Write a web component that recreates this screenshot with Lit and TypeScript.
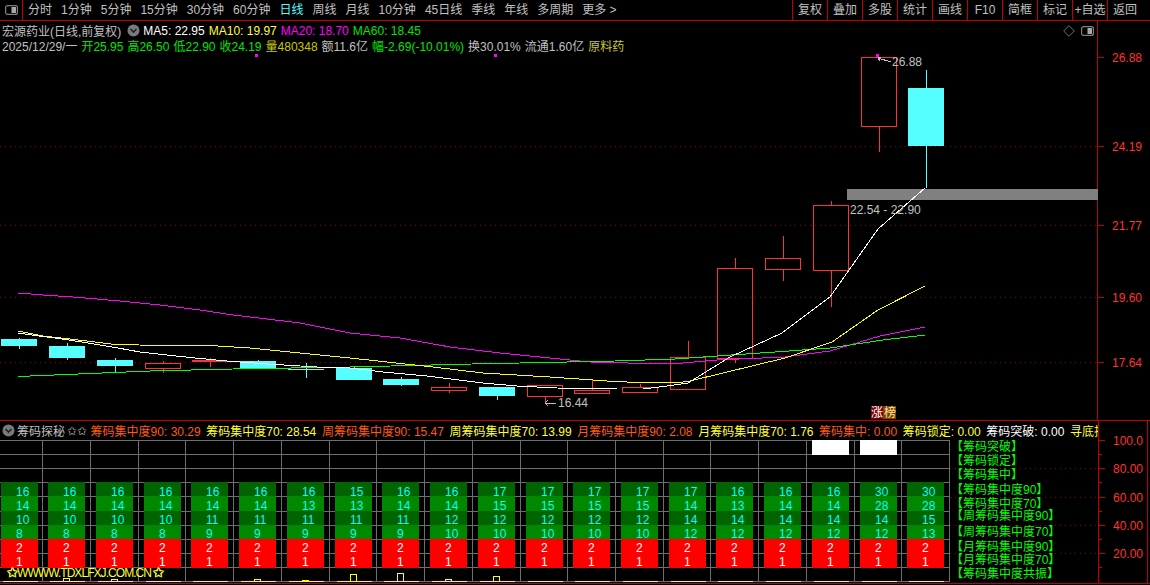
import { LitElement, html, svg, css } from "lit";
import { customElement } from "lit/decorators.js";

const RED = "#ff3232";
const CY = "#55ffff";
const DOT = "#8c0000";

type Candle = [number, number, number, number, number, number, boolean];
// x-left, x-right, body top, body bottom, wick top, wick bottom, rising
const candles: Candle[] = [
  [1, 36, 339, 346, 338, 349, false],
  [49, 84, 346, 358, 343, 360, false],
  [97, 132, 360, 366, 358, 373, false],
  [145, 180, 363, 368, 361, 373, true],
  [192, 227, 360, 362, 358, 367, true],
  [240, 275, 361, 368, 360, 369, false],
  [288, 323, 369, 370, 363, 378, false],
  [336, 371, 368, 380, 366, 380, false],
  [383, 418, 379, 385, 377, 386, false],
  [431, 466, 387, 390, 383, 393, true],
  [479, 514, 387, 396, 387, 400, false],
  [527, 562, 385, 396, 385, 403, true],
  [574, 609, 390, 393, 379, 394, true],
  [622, 657, 387, 392, 384, 392, true],
  [670, 705, 357, 389, 341, 389, true],
  [717, 752, 268, 358, 258, 363, true],
  [765, 800, 258, 269, 236, 281, true],
  [813, 848, 205, 270, 201, 307, true],
  [861, 896, 57, 126, 57, 152, true],
  [908, 943, 88, 146, 70, 188, false],
];

const ma5 = "18,333 39,336 55,338 82,342 100,345 118,348 140,352 167,355 195,358 227,361 267,364 317,367 350,368 383,372 427,376 483,383 517,386 557,388 617,389 643,389 667,386 688,383 730,357 782,333 830,297 878,229 925,188";
const ma10 = "18,331 43,336 70,339 95,342 111,344 139,345 218,346 250,348 290,352 350,358 387,362 433,367 483,373 550,377 607,381 627,382 683,382 690,381 785,358 832,342 878,310 925,286";
const ma20 = "18,293 43,295 73,297 120,301 160,305 200,310 233,315 267,319 300,323 350,333 400,338 450,347 500,353 550,358 590,362 628,363 683,363 717,360 785,357 830,351 880,336 925,327";
const ma60 = "18,377 30,376 78,374 150,371 233,369 350,367 472,364 520,363 615,361 675,359 717,356 775,352 830,348 883,340 925,335";

const bars = [1, 48, 96, 144, 191, 239, 287, 335, 382, 430, 478, 526, 573, 621, 669, 716, 764, 812, 860, 907];
const vlines = [42, 90, 138, 185, 233, 281, 329, 376, 424, 472, 520, 567, 615, 663, 710, 758, 806, 854, 901, 949];
const hlines = [440, 454, 468, 482, 496, 511, 525, 539, 553, 567, 581];
const rows: number[][] = [
  [16, 16, 16, 16, 16, 16, 16, 15, 16, 16, 17, 17, 17, 17, 17, 16, 16, 16, 30, 30],
  [14, 14, 14, 14, 14, 14, 13, 13, 14, 14, 15, 15, 15, 15, 14, 13, 14, 14, 28, 28],
  [10, 10, 10, 10, 11, 11, 11, 11, 11, 12, 12, 12, 12, 12, 14, 14, 14, 14, 14, 15],
  [8, 8, 8, 8, 9, 9, 9, 9, 9, 10, 10, 10, 10, 10, 12, 12, 12, 12, 12, 13],
];
const rowBand: [number, number, string][] = [
  [482, 14, "#006400"],
  [496, 15, "#008800"],
  [511, 14, "#006400"],
  [525, 14, "#008800"],
];
const legend: [string, number][] = [
  ["【筹码突破】", 447], ["【筹码锁定】", 461], ["【筹码集中】", 475],
  ["【筹码集中度90】", 490], ["【筹码集中度70】", 504], ["【周筹码集中度90】", 516],
  ["【周筹码集中度70】", 532], ["【月筹码集中度90】", 547], ["【月筹码集中度70】", 560],
  ["【筹码集中度共振】", 574],
];
const volBoxes: [number, number, boolean][] = [
  [63, 578, false], [111, 579, false], [254, 579, false], [302, 580, true],
  [350, 574, false], [397, 573, false], [445, 579, false], [493, 576, false],
];
const headerVals: [string, string][] = [
  ["筹码集中度90: 30.29", "or"], ["筹码集中度70: 28.54", "ye"],
  ["周筹码集中度90: 15.47", "or"], ["周筹码集中度70: 13.99", "ye"],
  ["月筹码集中度90: 2.08", "or"], ["月筹码集中度70: 1.76", "ye"],
  ["筹码集中: 0.00", "or"], ["筹码锁定: 0.00", "ye"],
  ["筹码突破: 0.00", "wh"], ["寻底指标: 0.00", "ye"],
];

const leftTabs = ["分时", "1分钟", "5分钟", "15分钟", "30分钟", "60分钟", "日线", "周线", "月线", "10分钟", "45日线", "季线", "年线", "多周期", "更多 >"];
const rightTabs = ["复权", "叠加", "多股", "统计", "画线", "F10", "简框", "标记", "+自选", "返回"];

const toggleIcon = (w = 13, h = 10) => html`<svg class="toggle" width=${w} height=${h} viewBox="0 0 13 10">
  <rect x="0.6" y="0.6" width="11.8" height="8.8" rx="2" fill="none" stroke="#808080" stroke-width="1.2"></rect>
  <rect x="6.5" y="2" width="4.5" height="6" fill="#a8a8a8"></rect>
</svg>`;
const chevron = html`<svg class="chev" width="13" height="13" viewBox="0 0 13 13">
  <circle cx="6.5" cy="6.5" r="6" fill="#7a7a7a"></circle>
  <path d="M3.5 5 L6.5 8 L9.5 5" fill="none" stroke="#222" stroke-width="1.6"></path>
</svg>`;

@customElement("app-root")
export class AppRoot extends LitElement {
  static styles = css`
    :host {
      display: block;
      width: 1150px;
      height: 585px;
      background: #000;
      overflow: hidden;
      font: 12px "Liberation Sans", "Noto Sans CJK SC", sans-serif;
      color: #c0c0c0;
    }
    .nav {
      display: flex;
      justify-content: space-between;
      height: 20px;
      border-bottom: 1px solid #c00000;
      line-height: 20px;
      padding-right: 8px;
    }
    .nav-left { display: flex; align-items: center; }
    .brand {
      width: 23px;
      height: 20px;
      box-sizing: border-box;
      border-right: 1px solid #c00000;
      display: flex;
      align-items: center;
      justify-content: center;
      margin-right: 5px;
    }
    .tabs { display: flex; gap: 9px; }
    .active { color: #55ffff; }
    .nav-right { display: flex; }
    .cell {
      width: 35px;
      box-sizing: border-box;
      border-left: 1px solid #c00000;
      text-align: center;
      white-space: nowrap;
    }
    .main { display: flex; height: 399px; border-bottom: 1px solid #c00000; }
    .stage { position: relative; width: 1098px; height: 399px; }
    .stage > svg { position: absolute; inset: 0; }
    .info { position: relative; padding: 2px 0 0 2px; }
    .line { display: flex; align-items: center; height: 15px; white-space: nowrap; }
    .l1 { gap: 4px; }
    .l2 { gap: 4px; }
    .name { margin-right: 2px; }
    .chev { margin: 0 -1px 0 0; flex: none; }
    .corner {
      position: absolute;
      top: 4px;
      right: 3px;
      display: flex;
      align-items: center;
      gap: 6px;
    }
    .axis { width: 52px; border-left: 1px solid #c00000; flex: none; }
    .axis svg, .grid svg { display: block; }
    .ind-head {
      display: flex;
      align-items: center;
      gap: 5.6px;
      width: 1098px;
      height: 19px;
      overflow: hidden;
      white-space: nowrap;
      padding-left: 2px;
      box-sizing: border-box;
    }
    .ind-head span { flex: none; }
    .ind-title { display: flex; align-items: center; margin-right: -2px; }
    .ind-title .chev { margin-right: 2px; }
    .stars { font-size: 12px; margin-left: 2px; }
    .or { color: #ff5a14; }
    .ye { color: #ffff32; }
    .wh { color: #fff; }
    .gr { color: #00e600; }
    .ma5 { color: #fff; }
    .ma20 { color: #ff00ff; }
    .gold { color: #c8c832; }
    .qty { color: #c8c800; }
    .ind { display: flex; height: 143px; }
    .grid { width: 1098px; }
    .ind-axis {
      width: 50px;
      border-left: 1px solid #c00000;
      border-right: 1px solid #c00000;
      margin-top: -19px;
      height: 162px;
      box-sizing: border-box;
      flex: none;
    }
    .bottom { height: 1px; background: #c00000; }
    text { font: 12px "Liberation Sans", "Noto Sans CJK SC", sans-serif; }
    .t-gray { fill: #c0c0c0; }
    .t-red { fill: #ff3232; }
    .t-cy { fill: #00ffff; }
    .t-wh { fill: #fff; }
    .t-gn { fill: #00ff00; }
    .t-ye { fill: #ffff32; }
    text.t-star { fill: #ffff32; stroke: #ffff32; stroke-width: 0.5; font-size: 13px; }
  `;

  private candle(c: Candle) {
    const [l, r, t, b, wt, wb, up] = c;
    const mid = Math.round((l + r) / 2) + 0.5;
    const col = up ? RED : CY;
    const w = r - l;
    if (up && b - t <= 2) {
      return svg`<line x1=${mid} x2=${mid} y1=${wt} y2=${wb} stroke=${col}></line>
        <rect x=${l} y=${t} width=${w} height=${b - t} fill=${col}></rect>`;
    }
    return up
      ? svg`<line x1=${mid} x2=${mid} y1=${wt} y2=${t} stroke=${col}></line>
          <line x1=${mid} x2=${mid} y1=${b} y2=${wb} stroke=${col}></line>
          <rect x=${l + 0.5} y=${t + 0.5} width=${w} height=${b - t} fill="none" stroke=${col}></rect>`
      : svg`<line x1=${mid} x2=${mid} y1=${wt} y2=${wb} stroke=${col}></line>
          <rect x=${l} y=${t} width=${w + 1} height=${b - t} fill=${col}></rect>`;
  }

  private chart() {
    const dots = [146, 225, 297, 362];
    return html`<svg width="1098" height="399" viewBox="0 21 1098 399" shape-rendering="crispEdges">
      ${dots.map((y) => svg`<line x1="0" x2="1098" y1=${y + 0.5} y2=${y + 0.5} stroke=${DOT} stroke-dasharray="1 4"></line>`)}
      <rect x="847" y="189" width="251" height="11" fill="#808080"></rect>
      ${candles.map((c) => this.candle(c))}
      <polyline points=${ma20} fill="none" stroke="#ff00ff"></polyline>
      <polyline points=${ma60} fill="none" stroke="#00ff00"></polyline>
      <polyline points=${ma10} fill="none" stroke="#ffff00"></polyline>
      <polyline points=${ma5} fill="none" stroke="#ffffff"></polyline>
      <rect x="255" y="54" width="3" height="3" fill="#ff00ff"></rect>
      <rect x="494" y="54" width="3" height="3" fill="#ff00ff"></rect>
      <rect x="876" y="54" width="3" height="3" fill="#ff00ff"></rect>
      <path d="M878 58 L891 62 M878 58 L881 57 M878 58 L880 61" stroke="#c0c0c0" fill="none"></path>
      <text class="t-gray" x="892" y="66">26.88</text>
      <text class="t-gray" x="850" y="214">22.54 - 22.90</text>
      <path d="M545 403 L556 403 M545 403 L548 400 M545 403 L548 406" stroke="#c0c0c0" fill="none"></path>
      <text class="t-gray" x="558" y="407">16.44</text>
      <rect x="871" y="406" width="12" height="13" fill="#800000"></rect>
      <rect x="883" y="406" width="13" height="13" fill="#804000"></rect>
      <text class="t-wh" x="871" y="417">涨</text>
      <text x="884" y="417" fill="#ffe8a0">榜</text>
    </svg>`;
  }

  private upperAxis() {
    const t: [string, number][] = [["26.88", 57], ["24.19", 146], ["21.77", 225], ["19.60", 297], ["17.64", 362]];
    return html`<svg width="52" height="399" viewBox="1099 21 52 399" shape-rendering="crispEdges">
      ${t.map(([s, y]) => svg`<line x1="1099" x2="1105" y1=${y + 0.5} y2=${y + 0.5} stroke="#c00000"></line>
        <text class="t-red" x="1113" y=${y + 5}>${s}</text>`)}
    </svg>`;
  }

  private grid() {
    return html`<svg width="1098" height="143" viewBox="0 440 1098 143" shape-rendering="crispEdges">
      ${hlines.map((y) => svg`<line x1="0" x2="950" y1=${y + 0.5} y2=${y + 0.5} stroke="#6e6e6e"></line>`)}
      ${vlines.map((x) => svg`<line x1=${x + 0.5} x2=${x + 0.5} y1="440" y2="582" stroke="#6e6e6e"></line>`)}
      ${[468, 497, 525, 553].map((y) => svg`<line x1="950" x2="1098" y1=${y + 0.5} y2=${y + 0.5} stroke=${DOT} stroke-dasharray="1 4"></line>`)}
      <rect x="812" y="440" width="37" height="15" fill="#fff"></rect>
      <rect x="860" y="440" width="37" height="15" fill="#fff"></rect>
      ${bars.map((x, i) => {
        const tx = x + 15;
        return svg`
          ${rowBand.map(([y, h, f]) => svg`<rect x=${x} y=${y} width="37" height=${h} fill=${f}></rect>`)}
          <rect x=${x} y="539" width="37" height="29" fill="#ff0000"></rect>
          ${rows.map((r, k) => svg`<text class="t-cy" x=${tx} y=${496 + k * 14}>${r[i]}</text>`)}
          <text class="t-wh" x=${tx} y="552">2</text>
          <text class="t-wh" x=${tx} y="566">1</text>
          <line x1=${x + 2} x2=${x + 37} y1="581.5" y2="581.5" stroke="#ffff00"></line>`;
      })}
      ${volBoxes.map(([x, y, fill]) => svg`<rect x=${x + 0.5} y=${y + 0.5} width="6" height=${581 - y} fill=${fill ? "#ffff00" : "none"} stroke="#ffff00"></rect>`)}
      <text class="t-star" x="7" y="577">✩</text>
      <text class="t-ye" x="17" y="577" textLength="135" lengthAdjust="spacing">WWWW.TDXLFXJ.COM.CN</text>
      <text class="t-star" x="153" y="577">✩</text>
      ${legend.map(([s, y]) => svg`<text class="t-gn" x="951" y=${y + 4}>${s}</text>`)}
    </svg>`;
  }

  private lowerAxis() {
    const t: [string, number][] = [["100.0", 440], ["80.00", 468], ["60.00", 497], ["40.00", 525], ["20.00", 553]];
    const minor = [454, 482, 511, 539, 567];
    return html`<svg width="48" height="162" viewBox="1099 421 48 162" shape-rendering="crispEdges">
      ${t.map(([s, y]) => svg`<line x1="1099" x2="1105" y1=${y + 0.5} y2=${y + 0.5} stroke="#c00000"></line>
        <text class="t-red" x="1113" y=${y + 5}>${s}</text>`)}
      ${minor.map((y) => svg`<line x1="1099" x2="1102" y1=${y + 0.5} y2=${y + 0.5} stroke="#c00000"></line>`)}
    </svg>`;
  }

  render() {
    return html`
      <div class="nav">
        <div class="nav-left">
          <div class="brand">${toggleIcon()}</div>
          <div class="tabs">
            ${leftTabs.map((t) => html`<span class=${t === "日线" ? "active" : ""}>${t}</span>`)}
          </div>
        </div>
        <div class="nav-right">${rightTabs.map((t) => html`<div class="cell">${t}</div>`)}</div>
      </div>
      <div class="main">
        <div class="stage">
          ${this.chart()}
          <div class="info">
            <div class="line l1">
              <span class="name">宏源药业(日线,前复权)</span>
              ${chevron}
              <span class="ma5">MA5: 22.95</span>
              <span class="ye">MA10: 19.97</span>
              <span class="ma20">MA20: 18.70</span>
              <span class="gr">MA60: 18.45</span>
            </div>
            <div class="line l2">
              <span>2025/12/29/一</span>
              <span class="gr">开25.95</span>
              <span class="gr">高26.50</span>
              <span class="gr">低22.90</span>
              <span class="gr">收24.19</span>
              <span class="qty">量480348</span>
              <span>额11.6亿</span>
              <span class="gr">幅-2.69(-10.01%)</span>
              <span>换30.01%</span>
              <span>流通1.60亿</span>
              <span class="gold">原料药</span>
            </div>
          </div>
          <div class="corner">
            <svg width="12" height="12" viewBox="0 0 12 12"><path d="M6 .7 L11.3 6 L6 11.3 L.7 6 Z" fill="none" stroke="#707070"></path></svg>
            ${toggleIcon()}
          </div>
        </div>
        <div class="axis">${this.upperAxis()}</div>
      </div>
      <div class="ind-head">
        <span class="ind-title">${chevron}筹码探秘<span class="stars">✩✩</span></span>
        ${headerVals.map(([s, c]) => html`<span class=${c}>${s}</span>`)}
      </div>
      <div class="ind">
        <div class="grid">${this.grid()}</div>
        <div class="ind-axis">${this.lowerAxis()}</div>
      </div>
      <div class="bottom"></div>
    `;
  }
}
